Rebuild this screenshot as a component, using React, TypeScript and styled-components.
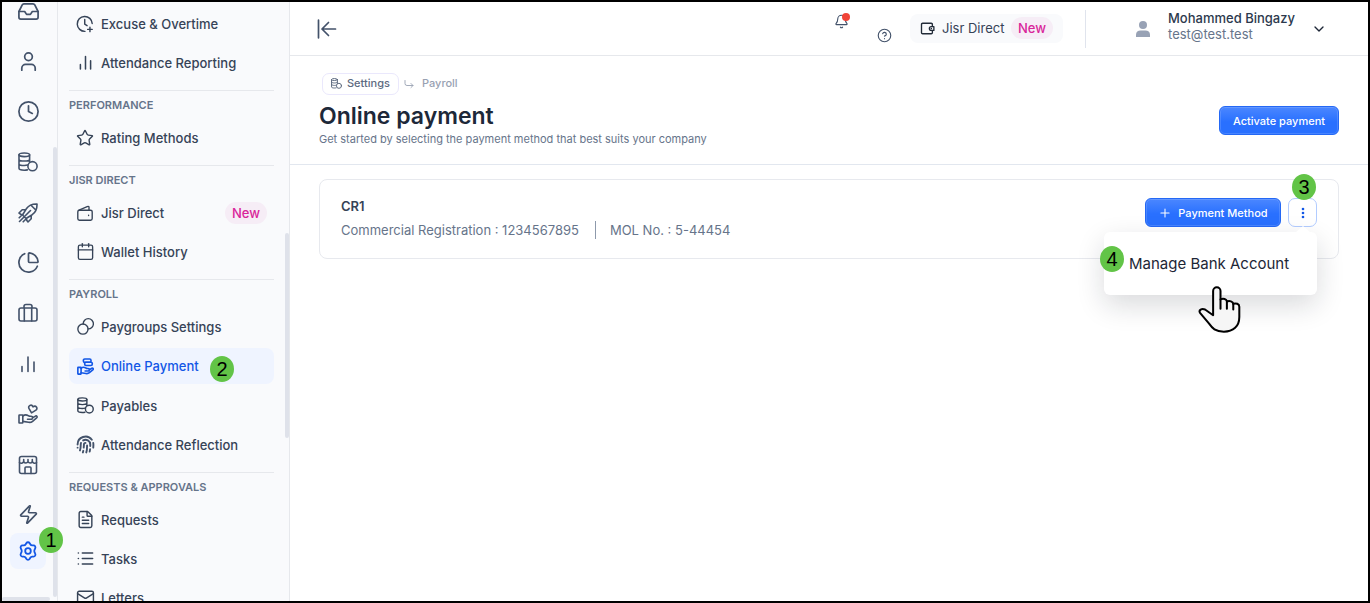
import React from "react";
import styled, { createGlobalStyle, css } from "styled-components";
import {
  BellIcon, Calendar, ChevronDown, CircleHelp, Clock, FileText, Fingerprint, Inbox, List, Mail,
  PieChart, Plus, Star, User, Zap,
} from "lucide-react";

const color = {
  side: "#f9fafc",
  line: "#e6e8ec",
  thumb: "#dfe2ea",
  icon: "#43526a",
  text: "#364357",
  muted: "#66748a",
  blue: "#1257e6",
  tint: "#eff4ff",
  primary: "#2970ff",
  pink: "#d9259a",
  pinkTint: "#f6edf6",
};

const GlobalStyle = createGlobalStyle`
  * { box-sizing: border-box; }
  body { margin: 0; font-family: Inter, "Open Sans", sans-serif; font-size: 13px; color: ${color.text}; background: #fff; }
  button { font-family: inherit; cursor: pointer; }
  a { color: inherit; text-decoration: none; }
  ul { list-style: none; margin: 0; padding: 0; }
  h1, h2, h3, p { margin: 0; }
  svg { display: block; flex: none; }
`;

/* ---------- icons ---------- */

type GlyphProps = { size?: number; stroke?: number; children: React.ReactNode };

const Glyph = ({ size = 20, stroke = 1.6, children }: GlyphProps) => (
  <svg width={size} height={size} viewBox="0 0 20 20" fill="none" stroke="currentColor"
    strokeWidth={stroke} strokeLinecap="round" strokeLinejoin="round" aria-hidden="true">
    {children}
  </svg>
);

const CoinsIcon = ({ size, stroke }: { size?: number; stroke?: number }) => (
  <Glyph size={size} stroke={stroke}>
    <ellipse cx="6.300" cy="2.800" rx="5.300" ry="1.800" />
    <path d="M1 2.800v13.500c0 1.200 2.300 1.900 5.300 1.900 1.100 0 2.100-.1 3-.3M11.600 2.800v7M1 7.200c0 1 2.300 1.800 5.300 1.800s5.300-.8 5.300-1.800M1 11.700c0 1 2.300 1.800 5.300 1.800 1.200 0 2.300-.1 3.200-.4" />
    <circle cx="14.500" cy="14.200" r="4.600" />
  </Glyph>
);

const RocketIcon = () => (
  <Glyph>
    <path d="M19 1C13.500.8 10.500 2.600 8.300 5.800L4.500 12 8 15.500l6.200-3.800C17.400 9.500 19.200 6.500 19 1ZM13 2.200 17.800 7M7.700 6.800H4.200L1 10l1.800 1.300 2.200.3M13.200 12.300v3.500L10 19l-1.300-1.800-.3-2.200M12.500 7.500l-11 11M1.200 14.800l2-2M5.200 18.800l2-2" />
  </Glyph>
);

const BriefcaseIcon = () => (
  <Glyph>
    <rect x="1" y="5" width="18" height="13" rx="2" />
    <path d="M6 5V3.500A2 2 0 0 1 8 1.500h4a2 2 0 0 1 2 2V5M6.300 5v13M13.700 5v13" />
  </Glyph>
);

const BarsIcon = ({ size }: { size?: number }) => (
  <Glyph size={size} stroke={size ? 1.8 : 1.6}>
    <path d="M4 12.500v5M10 3v14.500M16 8v9.500" />
  </Glyph>
);

const openHand = "M4.800 12c1.600-1.200 3.600-1.400 5.200-.5l1.500.8h1.600a1.500 1.500 0 0 1 0 3H9.500M14.500 13.800l3-1.700c1.300-.6 2.200.8 1.100 1.800l-4 3.400c-1.200 1-2.500 1.300-4 1l-5.800-.9";

const HandHeartIcon = () => (
  <Glyph>
    <rect x="1" y="11" width="3.800" height="8" rx=".4" />
    <path d={openHand} />
    <path transform="rotate(14 14.500 5)" d="M14.500 9 10.900 5.300c-1.900-2.400 1.400-5.200 3.600-2.500 2.200-2.700 5.500.1 3.600 2.500Z" />
  </Glyph>
);

const HandCoinsIcon = () => (
  <Glyph size={17} stroke={1.9}>
    <rect x="1" y="11" width="3.800" height="8" rx=".4" />
    <path d={openHand} />
    <rect x="7.500" y="1.200" width="9" height="3.800" rx="1.600" />
    <rect x="9" y="5" width="9" height="3.800" rx="1.600" />
  </Glyph>
);

const StoreIcon = () => (
  <Glyph>
    <rect x="1.500" y="1.500" width="17" height="17" rx="2" />
    <path d="M1.500 7.500c1.400 1.200 3 1 4.200-.8 1.200 1.800 3.200 1.800 4.300 0 1.100 1.800 3.100 1.800 4.300 0 1.200 1.800 2.800 2 4.200.8M5.700 4.500v2.200M10 4.500v2.200M14.300 4.500v2.200M7 18.500V13a1 1 0 0 1 1-1h4a1 1 0 0 1 1 1v5.500" />
  </Glyph>
);

const GearIcon = () => (
  <Glyph stroke={1.8}>
    <path d="M8.300 2.200c.8-1.300 2.600-1.300 3.400 0l.6 1.100c.4.700 1.100 1.100 1.900 1.100h1.300c1.500 0 2.400 1.600 1.700 2.900l-.7 1.600c-.3.700-.3 1.500 0 2.200l.7 1.600c.7 1.300-.2 2.900-1.700 2.900h-1.300c-.8 0-1.500.4-1.900 1.100l-.6 1.100c-.8 1.300-2.600 1.300-3.400 0l-.6-1.100c-.4-.7-1.100-1.100-1.900-1.100H4.500c-1.500 0-2.400-1.600-1.700-2.900l.7-1.600c.3-.7.3-1.500 0-2.200l-.7-1.600C2.100 6 3 4.400 4.500 4.400h1.300c.8 0 1.500-.4 1.900-1.100Z" />
    <circle cx="10" cy="10" r="2.800" />
  </Glyph>
);

const ClockPlusIcon = () => (
  <Glyph size={18} stroke={1.6}>
    <path d="M18 9.500A8.300 8.300 0 1 0 10 18.200M9.700 5v5.200l2.600 1.600M15.500 13.500v5M13 16h5" />
  </Glyph>
);

const WalletIcon = () => (
  <Glyph size={16} stroke={1.7}>
    <rect x="1" y="6.500" width="18" height="12.500" rx="2" />
    <path d="M2.500 6.500 13.500 1.800a1 1 0 0 1 1.500 1v3.700M14.500 12.800v.4" />
  </Glyph>
);

const CirclesIcon = () => (
  <Glyph size={17} stroke={1.6}>
    <circle cx="7" cy="13" r="6" />
    <path d="M7.300 7a6 6 0 1 1 5.700 5.800" />
  </Glyph>
);

const CollapseIcon = () => (
  <Glyph stroke={1.700}>
    <path d="M1.500 1.200v17.600M18.500 10H5M11.500 3.500 5 10l6.500 6.500" />
  </Glyph>
);

const WalletSmallIcon = () => (
  <Glyph size={15} stroke={1.800}>
    <path d="M16.500 7V4.500a1.500 1.500 0 0 0-1.500-1.500H3.500A1.500 1.500 0 0 0 2 4.500v11A1.500 1.500 0 0 0 3.500 17H15a1.500 1.500 0 0 0 1.500-1.500V13M18.500 7.500h-3.500a2.500 2.500 0 0 0 0 5h3.500ZM15 10h.2" />
  </Glyph>
);

const TurnIcon = () => (
  <Glyph size={10} stroke={1.800}>
    <path d="M2 3v6q0 4 4 4h12M14 9l4 4-4 4" />
  </Glyph>
);

const PersonIcon = () => (
  <svg width="14" height="16" viewBox="0 0 14 16" fill="#98a2b5" aria-hidden="true">
    <circle cx="7" cy="4" r="4" />
    <path d="M0 16v-2.500C0 11 2 9.500 4.500 9.500h5C12 9.500 14 11 14 13.500V16Z" />
  </svg>
);

const KebabIcon = () => (
  <svg width="4" height="12" viewBox="0 0 4 12" fill="currentColor" aria-hidden="true">
    <circle cx="2" cy="2" r="1.300" /><circle cx="2" cy="6" r="1.300" /><circle cx="2" cy="10" r="1.300" />
  </svg>
);

/* ---------- shell ---------- */

const Shell = styled.div`
  position: relative;
  display: flex;
  height: 100vh;
  border: 2px solid #000;
  overflow: hidden;
`;

const Rail = styled.nav`
  position: relative;
  display: flex;
  flex-direction: column;
  flex: none;
  width: 56px;
  padding: 0 8px 32px;
  background: ${color.side};
  border-right: 1px solid ${color.line};
`;

const RailList = styled.ul`
  display: flex;
  flex-direction: column;
  justify-content: space-between;
  flex: 1;
  margin-top: -9px;
`;

const RailLink = styled.a<{ $active?: boolean }>`
  display: flex;
  align-items: center;
  justify-content: center;
  width: 36px;
  height: 36px;
  border-radius: 8px;
  color: ${(p) => (p.$active ? color.blue : color.icon)};
  background: ${(p) => (p.$active ? color.tint : "transparent")};
`;

const ScrollThumb = styled.span<{ $top: string; $bottom: string }>`
  position: absolute;
  right: 0;
  top: ${(p) => p.$top};
  bottom: ${(p) => p.$bottom};
  width: 4px;
  border-radius: 2px;
  background: ${color.thumb};
`;

const ScrollThumbX = styled.span`
  position: absolute;
  left: 0;
  right: 7px;
  bottom: 0;
  height: 4px;
  border-radius: 2px;
  background: ${color.thumb};
`;

const Sidebar = styled.nav`
  position: relative;
  flex: none;
  width: 232px;
  padding: 4px 15px 0 11px;
  background: ${color.side};
  border-right: 1px solid ${color.line};
  overflow: hidden;
`;

const Section = styled.section`
  padding-bottom: 10px;
  & + & { border-top: 1px solid ${color.line}; padding-top: 4px; }
`;

const SectionTitle = styled.h2`
  margin-bottom: 5px;
  font-size: 11px;
  line-height: 20px;
  font-weight: 600;
  text-transform: uppercase;
  color: ${color.muted};
`;

const ItemList = styled.ul`
  display: flex;
  flex-direction: column;
  gap: 4px;
`;

const ItemLink = styled.a<{ $active?: boolean }>`
  display: flex;
  align-items: center;
  gap: 8px;
  height: ${(p) => (p.$active ? "36px" : "35px")};
  padding: 0 7px 0 8px;
  border-radius: 8px;
  font-weight: 500;
  white-space: nowrap;
  color: ${(p) => (p.$active ? color.blue : color.text)};
  background: ${(p) => (p.$active ? color.tint : "transparent")};
`;

const ItemIcon = styled.span`
  display: flex;
  align-items: center;
  justify-content: center;
  width: 16px;
  height: 16px;
`;

const NewTag = styled.span`
  padding: 0 7px;
  border-radius: 11px;
  font-size: 13px;
  line-height: 22px;
  font-weight: 500;
  color: ${color.pink};
  background: ${color.pinkTint};
  ${ItemLink} & { margin-left: auto; }
`;

const Main = styled.main`
  flex: 1;
  min-width: 0;
  background: #fff;
`;

/* ---------- top bar ---------- */

const TopBar = styled.header`
  display: flex;
  align-items: center;
  height: 54px;
  padding: 0 41px 0 27px;
  border-bottom: 1px solid ${color.line};
`;

const IconButton = styled.button<{ $align?: string }>`
  position: relative;
  display: flex;
  align-self: ${(p) => p.$align || "center"};
  padding: 0;
  border: 0;
  background: none;
  color: ${color.icon};
`;

const TopActions = styled.div`
  display: flex;
  align-items: center;
  height: 38px;
  margin-left: auto;
`;

const Alerts = styled.div`
  display: flex;
  align-self: stretch;
  gap: 28px;
  margin-right: 18px;
  padding: 4px 0 5px;
`;

const AlertDot = styled.span`
  position: absolute;
  top: -1px;
  right: -1px;
  width: 8px;
  height: 8px;
  border-radius: 50%;
  background: #f04438;
`;

const DirectLink = styled.a`
  display: flex;
  align-items: center;
  width: 153px;
  height: 29px;
  padding: 0 10px 1px;
  border-radius: 8px;
  white-space: nowrap;
  background: ${color.side};
  & > svg { margin-right: 7px; color: #222b38; }
  & > ${NewTag} { margin-left: auto; }
`;

const Account = styled.button`
  display: flex;
  align-items: center;
  height: 38px;
  margin-left: 22px;
  padding: 0 0 0 50px;
  border: 0;
  border-left: 1px solid #e0e4ed;
  background: none;
  text-align: left;
`;

const AccountText = styled.span`
  display: flex;
  flex-direction: column;
  width: 136px;
  margin: 0 7px 6px 18px;
  font-size: 13px;
  line-height: 16px;
  white-space: nowrap;
  color: ${color.muted};
`;

const AccountName = styled.strong`
  font-weight: 500;
  color: #2c394d;
`;

/* ---------- page header ---------- */

const PageHeader = styled.div`
  display: flex;
  align-items: center;
  justify-content: space-between;
  padding: 17px 29px 16px;
  border-bottom: 1px solid #e2e7ef;
`;

const Crumbs = styled.nav`
  display: flex;
  align-items: center;
  gap: 5px;
  margin: 0 0 7px 3px;
  font-size: 11px;
  font-weight: 500;
  color: #98a1b2;
  & > a:last-child { margin-left: 3px; padding-bottom: 2px; }
`;

const CrumbChip = styled.a`
  display: flex;
  align-items: center;
  gap: 5px;
  width: 77px;
  height: 22px;
  padding: 0 8px 2px;
  border: 1px solid #eae8fc;
  border-radius: 7px;
  color: #5d6a7f;
`;

const Title = styled.h1`
  font-size: 23px;
  line-height: 28px;
  font-weight: 600;
  color: #1d2839;
`;

const Subtitle = styled.p`
  font-size: 11px;
  line-height: 18px;
  color: ${color.muted};
`;

const PrimaryButton = styled.button`
  display: flex;
  align-items: center;
  justify-content: center;
  gap: 6px;
  height: 29px;
  padding: 0 11px;
  border: 1px solid #2468f5;
  border-radius: 6px;
  font-size: 11px;
  font-weight: 500;
  white-space: nowrap;
  color: #fff;
  background: linear-gradient(#4b87ff, ${color.primary} 55%);
  box-shadow: inset 0 0 0 1px rgba(255, 255, 255, 0.14);
`;

const ActivateButton = styled(PrimaryButton)`
  width: 120px;
  margin-top: 20px;
`;

const MethodButton = styled(PrimaryButton)`
  width: 136px;
`;

/* ---------- registration card ---------- */

const Content = styled.div`
  padding: 14px 29px;
`;

const Card = styled.section`
  display: flex;
  align-items: flex-start;
  justify-content: space-between;
  padding: 18px 21px 19px;
  border: 1px solid #e7e9ee;
  border-radius: 8px;
`;

const CardTitle = styled.h3`
  font-size: 13px;
  line-height: 16px;
  font-weight: 600;
`;

const Facts = styled.div`
  display: flex;
  align-items: center;
  gap: 16px;
  margin-top: 7px;
  line-height: 18px;
  color: ${color.muted};
  & > span + span { padding-left: 14px; border-left: 1px solid #8d99ab; }
`;

const CardActions = styled.div`
  position: relative;
  display: flex;
  gap: 7px;
`;

const KebabButton = styled.button`
  display: flex;
  align-items: center;
  justify-content: center;
  width: 29px;
  height: 29px;
  padding: 0;
  border: 1px solid #b2ccff;
  border-radius: 7px;
  color: ${color.blue};
  background: #fff;
`;

const Menu = styled.div`
  position: absolute;
  top: 34px;
  right: 0;
  width: 213px;
  padding: 20px 24px 20px 25px;
  border-radius: 6px;
  background: #fff;
  box-shadow: 0 10px 28px rgba(16, 24, 40, 0.16);
  &::before {
    content: "";
    position: absolute;
    top: -6px;
    right: 7px;
    border: 7px solid transparent;
    border-top: 0;
    border-bottom: 6px solid #fff;
  }
`;

const MenuItem = styled.button`
  display: block;
  width: 100%;
  padding: 0;
  border: 0;
  background: none;
  font-size: 15px;
  line-height: 23px;
  white-space: nowrap;
  text-align: left;
  color: #1d2636;
`;

/* ---------- guide marks ---------- */

const spots = {
  rail: css`left: 29px; top: -6px;`,
  item: css`left: 141px; top: 8px;`,
  kebab: css`right: 1px; top: -24px;`,
  menu: css`left: -4px; top: 14px;`,
};

const ItemRow = styled.li`
  position: relative;
`;

const RailFooter = styled.div`
  position: relative;
  z-index: 1;
`;

const Step = styled.span<{ $at: keyof typeof spots }>`
  position: absolute;
  z-index: 2;
  width: 24px;
  height: 26px;
  border-radius: 50%;
  font: 20px/26px "Liberation Sans", sans-serif;
  text-align: center;
  color: #000;
  background: #62c447;
  ${(p) => spots[p.$at]}
`;

const Pointer = styled.svg`
  position: absolute;
  left: 94px;
  top: 54px;
`;

const railItems: [string, React.ReactNode][] = [
  ["Inbox", <Inbox size={23} strokeWidth={1.8} />],
  ["Employees", <User size={23} strokeWidth={1.8} />],
  ["Time", <Clock size={23} strokeWidth={1.8} />],
  ["Payroll", <CoinsIcon />],
  ["Performance", <RocketIcon />],
  ["Analytics", <PieChart size={23} strokeWidth={1.8} />],
  ["Hiring", <BriefcaseIcon />],
  ["Reports", <BarsIcon />],
  ["Benefits", <HandHeartIcon />],
  ["Marketplace", <StoreIcon />],
  ["Automation", <Zap size={21} strokeWidth={1.9} />],
];

type Item = { label: string; icon: React.ReactNode; tag?: string; active?: boolean };

const sections: { title?: string; items: Item[] }[] = [
  {
    items: [
      { label: "Excuse & Overtime", icon: <ClockPlusIcon /> },
      { label: "Attendance Reporting", icon: <BarsIcon size={17} /> },
    ],
  },
  { title: "Performance", items: [{ label: "Rating Methods", icon: <Star size={18} strokeWidth={1.9} /> }] },
  {
    title: "Jisr Direct",
    items: [
      { label: "Jisr Direct", icon: <WalletIcon />, tag: "New" },
      { label: "Wallet History", icon: <Calendar size={19} strokeWidth={1.7} /> },
    ],
  },
  {
    title: "Payroll",
    items: [
      { label: "Paygroups Settings", icon: <CirclesIcon /> },
      { label: "Online Payment", icon: <HandCoinsIcon />, active: true },
      { label: "Payables", icon: <CoinsIcon size={17} stroke={1.7} /> },
      { label: "Attendance Reflection", icon: <Fingerprint size={19} strokeWidth={2.4} color={color.icon} /> },
    ],
  },
  {
    title: "Requests & Approvals",
    items: [
      { label: "Requests", icon: <FileText size={19} strokeWidth={1.8} /> },
      { label: "Tasks", icon: <List size={19} strokeWidth={2} /> },
      { label: "Letters", icon: <Mail size={19} strokeWidth={1.8} /> },
    ],
  },
];

export default function App() {
  return (
    <>
      <GlobalStyle />
      <Shell>
        <Rail aria-label="Modules">
          <RailList>
            {railItems.map(([label, icon]) => (
              <li key={label}><RailLink href="#" aria-label={label}>{icon}</RailLink></li>
            ))}
          </RailList>
          <ScrollThumb $top="145px" $bottom="4px" />
          <ScrollThumbX />
          <RailFooter>
            <RailLink href="#" aria-label="Settings" $active><GearIcon /></RailLink>
            <Step $at="rail">1</Step>
          </RailFooter>
        </Rail>

        <Sidebar aria-label="Settings">
          {sections.map((section, i) => (
            <Section key={i}>
              {section.title && <SectionTitle>{section.title}</SectionTitle>}
              <ItemList>
                {section.items.map((item) => (
                  <ItemRow key={item.label}>
                    <ItemLink href="#" $active={item.active}>
                      <ItemIcon>{item.icon}</ItemIcon>
                      {item.label}
                      {item.tag && <NewTag>{item.tag}</NewTag>}
                    </ItemLink>
                    {item.active && <Step $at="item">2</Step>}
                  </ItemRow>
                ))}
              </ItemList>
            </Section>
          ))}
          <ScrollThumb $top="231px" $bottom="163px" />
        </Sidebar>

        <Main>
          <TopBar>
            <IconButton aria-label="Collapse menu"><CollapseIcon /></IconButton>
            <TopActions>
              <Alerts>
                <IconButton aria-label="Notifications" $align="flex-start">
                  <BellIcon size={15} strokeWidth={1.8} /><AlertDot />
                </IconButton>
                <IconButton aria-label="Help" $align="flex-end">
                  <CircleHelp size={15} strokeWidth={1.8} />
                </IconButton>
              </Alerts>
              <DirectLink href="#"><WalletSmallIcon />Jisr Direct<NewTag>New</NewTag></DirectLink>
              <Account>
                <PersonIcon />
                <AccountText>
                  <AccountName>Mohammed Bingazy</AccountName>
                  <span>test@test.test</span>
                </AccountText>
                <ChevronDown size={16} color="#1d2636" />
              </Account>
            </TopActions>
          </TopBar>

          <PageHeader>
            <div>
              <Crumbs aria-label="Breadcrumb">
                <CrumbChip href="#"><CoinsIcon size={11} stroke={1.8} />Settings</CrumbChip>
                <TurnIcon />
                <a href="#">Payroll</a>
              </Crumbs>
              <Title>Online payment</Title>
              <Subtitle>Get started by selecting the payment method that best suits your company</Subtitle>
            </div>
            <ActivateButton>Activate payment</ActivateButton>
          </PageHeader>

          <Content>
            <Card>
              <div>
                <CardTitle>CR1</CardTitle>
                <Facts>
                  <span>Commercial Registration : 1234567895</span>
                  <span>MOL No. : 5-44454</span>
                </Facts>
              </div>
              <CardActions>
                <MethodButton><Plus size={14} strokeWidth={1.8} />Payment Method</MethodButton>
                <KebabButton aria-label="More options"><KebabIcon /></KebabButton>
                <Step $at="kebab">3</Step>
                <Menu>
                  <MenuItem>Manage Bank Account</MenuItem>
                  <Step $at="menu">4</Step>
                  <Pointer width="43" height="47" viewBox="355 378 128 140" fill="#f6f6f6" stroke="#000"
                    strokeWidth="6" strokeLinecap="round" strokeLinejoin="round" aria-hidden="true">
                    <path d="M400 465V393a11 11 0 0 1 22 0v25c8-4 18-1 19 6 8-3 18 0 19 7 8-3 18 0 18 9v30c0 28-18 44-46 44-26 0-34-10-44-24l-27-32c-5-9 5-14 15-10Z" />
                    <path d="M422 418v28M441 424v22M460 431v17" fill="none" />
                  </Pointer>
                </Menu>
              </CardActions>
            </Card>
          </Content>
        </Main>
      </Shell>
    </>
  );
}
